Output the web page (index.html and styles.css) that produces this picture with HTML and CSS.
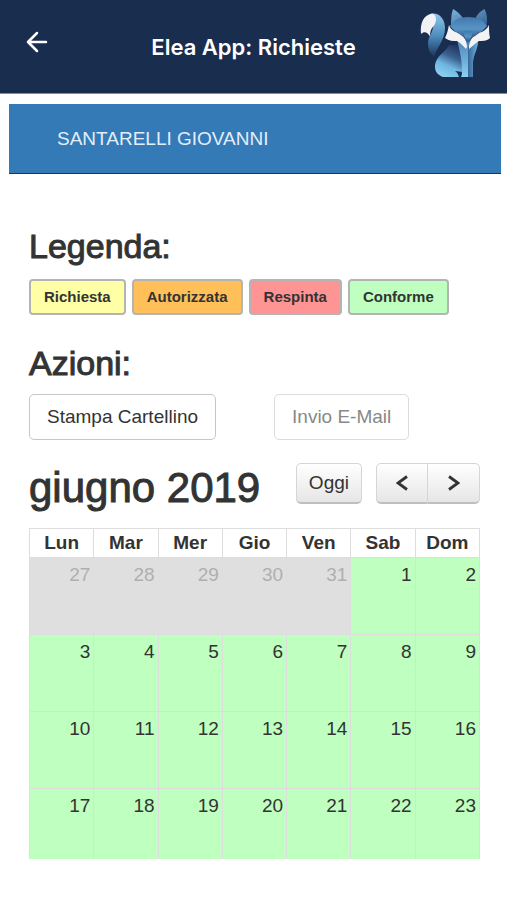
FILE: index.html
```html
<!DOCTYPE html>
<html lang="it">
<head>
<meta charset="utf-8">
<meta name="viewport" content="width=device-width, initial-scale=1">
<title>Elea App: Richieste</title>
<link rel="stylesheet" href="styles.css">
</head>
<body>
<header class="topbar">
  <button class="back" type="button" aria-label="Indietro">
    <svg width="22" height="22" viewBox="0 0 22 22" fill="none" stroke="#fff" stroke-width="2.5" stroke-linecap="round" stroke-linejoin="round"><path d="M20 11H2M11 2L2 11l9 9"/></svg>
  </button>
  <h1 class="title">Elea App: Richieste</h1>
  <svg class="logo" width="72" height="72" viewBox="0 0 72 72" aria-hidden="true">
    <defs>
      <linearGradient id="tail" x1="0" y1="0" x2="0" y2="1"><stop offset="0" stop-color="#8fc6e8"/><stop offset=".5" stop-color="#4f8fc0"/><stop offset="1" stop-color="#1c335a"/></linearGradient>
      <linearGradient id="body" x1=".7" y1="0" x2=".3" y2="1"><stop offset="0" stop-color="#20365f"/><stop offset=".35" stop-color="#3a608f"/><stop offset=".65" stop-color="#6fb7e0"/><stop offset="1" stop-color="#8bd0f2"/></linearGradient>
      <linearGradient id="chest" x1="0" y1="0" x2="0" y2="1"><stop offset="0" stop-color="#4d82b3"/><stop offset=".5" stop-color="#6aa9d5"/><stop offset="1" stop-color="#8bd0f2"/></linearGradient>
      <linearGradient id="leg" x1="0" y1="0" x2="1" y2="0"><stop offset="0" stop-color="#3a6797"/><stop offset="1" stop-color="#6cb0db"/></linearGradient>
      <linearGradient id="head" x1="0" y1="0" x2="0" y2="1"><stop offset="0" stop-color="#4377aa"/><stop offset=".4" stop-color="#5795c7"/><stop offset=".7" stop-color="#33608f"/><stop offset="1" stop-color="#5a94c2"/></linearGradient>
      <linearGradient id="ear" x1="0" y1="0" x2="1" y2="1"><stop offset="0" stop-color="#7ab6de"/><stop offset="1" stop-color="#2f5a8b"/></linearGradient>
    </defs>
    <path fill="url(#tail)" d="M12 7C19 5 26 11 26 21c0 12-8 19-11 29-4-4-6-8-6-13 0-8 5-11 5-18z"/>
    <path fill="#f1f2f5" d="M2 27C1 17 4 8 13 6.500c5 1 5 8 2 12-3 3-4 6-4 11-3-5-6-5-9-2.500z"/>
    <path fill="url(#body)" d="M30 38c-3 7-14 11-14 22 0 5 3 8 8 10h16c-1-3-2-5-4-6l8 1V38z"/>
    <path fill="url(#chest)" d="M38 32h21c0 9-5 15-5 24v14H42c1-2 1-4 1-7 0-12-3-21-5-31z"/>
    <path fill="url(#leg)" d="M49 40l10-6c0 9-5 14-5 22v14h-5z"/>
    <path fill="url(#ear)" d="M34 2c4 2 7 5 10 9l-12 9c0-7 0-12 2-18zM65.500 2c-4 2-7 5-9 9l11 9c1-7 1-12-2-18z"/>
    <path fill="url(#head)" d="M31 19c4-6 9-9 18-9s15 3 19 9L49 39z"/>
    <path fill="#1b3157" d="M38 24c2 4 6 6 10 8l-1 7c-4-3-7-9-9-15zM60 24c-2 4-6 6-10 8l0 7c4-3 8-9 10-15z"/>
    <path fill="url(#head)" d="M44 24h10l-4 14h-2z"/>
    <path fill="#f3f3f6" d="M30 18c2 7 9 7 13 11 3 2 5 6 5 11l-1 2c-3-3-5-6-9-8-4 0-8 0-12-3 2-4 3-8 4-13zM70 18c-3 7-10 7-14 11-4 2-6 6-6 11v2c4-3 6-6 10-8 4 0 8 0 11-3-1-4-1-8-1-13z"/>
  </svg>
</header>
<main>
  <div class="employee">SANTARELLI GIOVANNI</div>
  <div class="content">
    <h2 class="heading">Legenda:</h2>
    <div class="legend">
      <span class="chip requested">Richiesta</span>
      <span class="chip authorized">Autorizzata</span>
      <span class="chip rejected">Respinta</span>
      <span class="chip compliant">Conforme</span>
    </div>
    <h2 class="heading">Azioni:</h2>
    <div class="actions">
      <button class="action" type="button">Stampa Cartellino</button>
      <button class="action" type="button" disabled>Invio E-Mail</button>
    </div>
    <div class="toolbar">
      <h2 class="month">giugno 2019</h2>
      <button class="tool" type="button">Oggi</button>
      <div class="group">
        <button class="tool arrow" type="button" aria-label="Mese precedente"><svg width="12" height="16" viewBox="0 0 12 16" fill="none" stroke="#333" stroke-width="2.8"><path d="M11 1.500L2 8l9 6.500"/></svg></button>
        <button class="tool arrow" type="button" aria-label="Mese successivo"><svg width="12" height="16" viewBox="0 0 12 16" fill="none" stroke="#333" stroke-width="2.8"><path d="M1 1.500L10 8l-9 6.500"/></svg></button>
      </div>
    </div>
    <table class="calendar">
      <thead><tr><th>Lun</th><th>Mar</th><th>Mer</th><th>Gio</th><th>Ven</th><th>Sab</th><th>Dom</th></tr></thead>
      <tbody>
        <tr><td class="other">27</td><td class="other">28</td><td class="other">29</td><td class="other">30</td><td class="other">31</td><td>1</td><td>2</td></tr>
        <tr><td>3</td><td>4</td><td>5</td><td>6</td><td>7</td><td>8</td><td>9</td></tr>
        <tr><td>10</td><td>11</td><td>12</td><td>13</td><td>14</td><td>15</td><td>16</td></tr>
        <tr><td>17</td><td>18</td><td>19</td><td>20</td><td>21</td><td>22</td><td>23</td></tr>
      </tbody>
    </table>
  </div>
</main>
</body>
</html>
```
FILE: styles.css
```css
* { box-sizing: border-box; }
body {
  margin: 0;
  background: #fff;
  color: #333;
  font: 19px/24px "Liberation Sans", Arial, sans-serif;
}
h1, h2 { margin: 0; }
button { font: inherit; color: inherit; cursor: pointer; }

.topbar {
  display: grid;
  grid-template-columns: 72px 1fr 72px;
  align-items: center;
  height: 94px;
  padding: 0 16px;
  background: #192d4f;
  border-bottom: 1px solid #7890ad;
}
.back {
  display: flex;
  padding: 10px;
  margin-bottom: 10px;
  border: 0;
  background: none;
  justify-self: start;
}
.title {
  color: #fff;
  font: 600 22px/28px Inter, sans-serif;
  text-align: center;
}
.logo { margin-bottom: 8px; }

.employee {
  margin: 10px 6px 0 9px;
  padding: 23px 48px 22px;
  background: #337ab7;
  border-bottom: 1px solid #1d3557;
  color: #e4eef8;
}
.content { padding: 52px 27px 0 29px; }
.heading {
  font-size: 34px;
  line-height: 40px;
  font-weight: 400;
  -webkit-text-stroke: 1px #333;
}
.legend {
  display: flex;
  gap: 6px;
  margin: 13px 0 28px;
}
.chip {
  padding: 5px 13px;
  border: 2px solid #b4b4b4;
  border-radius: 4px;
  font-size: 15px;
  line-height: 22px;
  font-weight: 700;
}
.requested { background: #ffffa6; }
.authorized { background: #ffc059; }
.rejected { background: #ff9494; }
.compliant { background: #bfffbf; }
.actions {
  display: flex;
  gap: 58px;
  margin: 11px 0 23px;
}
.action {
  padding: 10px 17px;
  border: 1px solid #c6c6c6;
  border-radius: 5px;
  background: #fff;
}
.action:disabled { color: #888; border-color: #dcdcdc; }

.toolbar {
  display: flex;
  align-items: flex-start;
  margin-bottom: 15px;
}
.month {
  flex: 1;
  font-size: 42px;
  line-height: 50px;
  font-weight: 400;
  -webkit-text-stroke: 1px #333;
}
.tool {
  height: 41px;
  padding: 0 12px;
  border: 1px solid #d6d6d6;
  border-bottom: 2px solid #bfbfbf;
  border-radius: 5px;
  background: linear-gradient(#fff, #e6e6e6);
}
.group { display: flex; margin-left: 14px; }
.arrow {
  display: flex;
  align-items: center;
  justify-content: center;
  width: 52px;
}
.arrow:first-child { border-radius: 5px 0 0 5px; }
.arrow:last-child { border-radius: 0 5px 5px 0; border-left: 0; }

.calendar {
  width: 100%;
  table-layout: fixed;
  border-collapse: separate;
  border-spacing: 0;
  border-right: 1px solid #ddd;
}
.calendar th, .calendar td {
  border: 0 solid #ddd;
  border-width: 1px 0 0 1px;
}
.calendar th { height: 29px; padding: 0; }
.calendar td {
  height: 77px;
  padding: 5px 3px 0;
  background: #bfffbf;
  text-align: right;
  vertical-align: top;
}
.calendar .other { background: #dfdfdf; color: #afafaf; }
.calendar tbody tr:last-child td { height: 71px; }
```
